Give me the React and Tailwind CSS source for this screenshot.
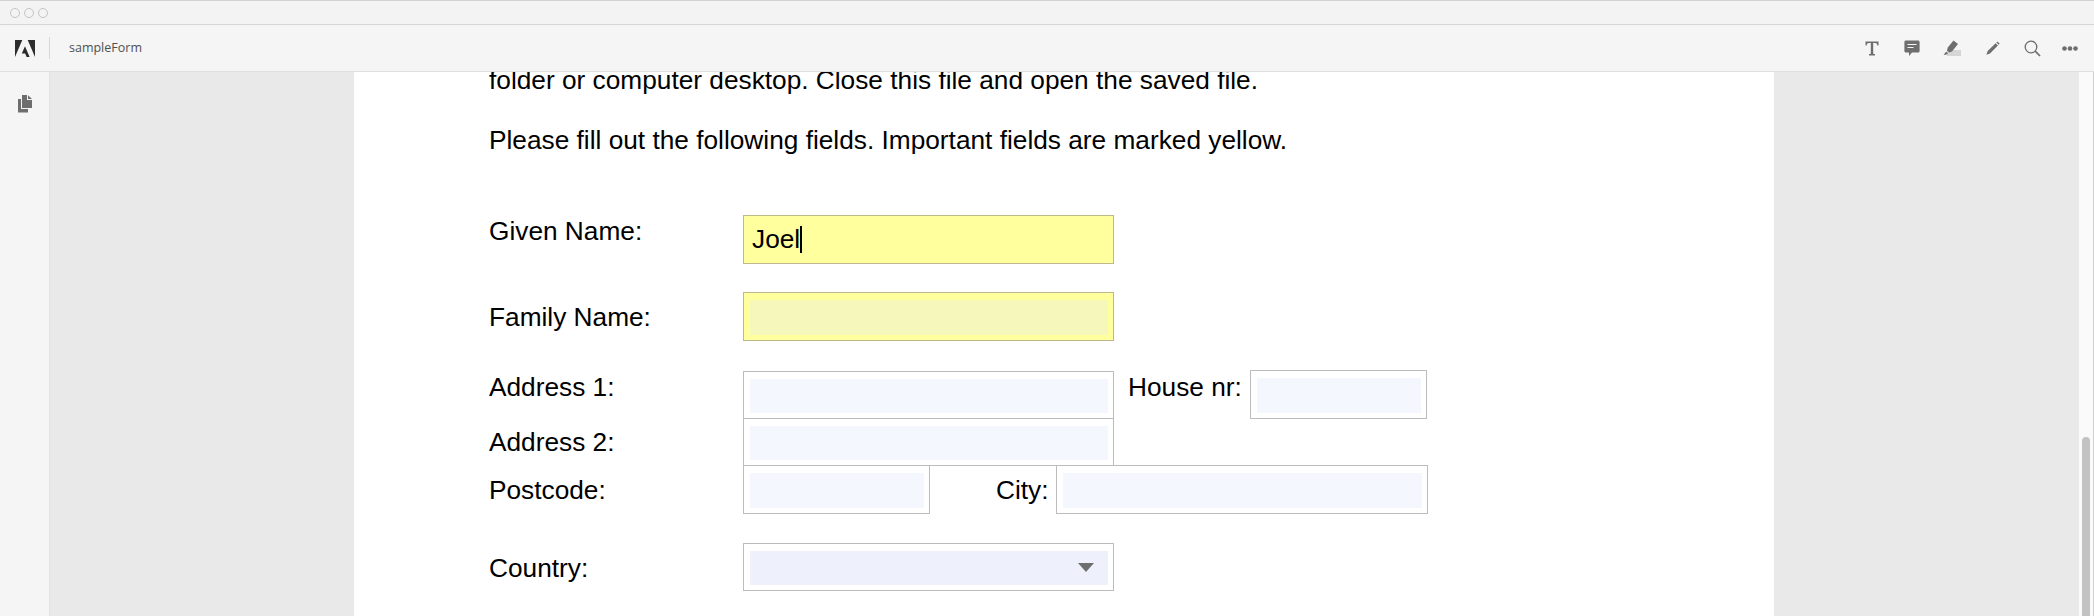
const BODY_FONT = 'font-["Liberation_Sans",Arial,sans-serif]'

function AdobeLogo() {
  return (
    <svg width="20" height="17" viewBox="0 0 20 17" fill="#2c2c2c">
      <path d="M0 0H7.3L0 17Z" />
      <path d="M12.7 0H20V17Z" />
      <path d="M10 6.3L14.6 17H11.6L10.2 13.5H6.8Z" />
    </svg>
  )
}

function PagesIcon() {
  return (
    <svg width="16" height="18" viewBox="0 0 16 18" fill="#6e6e6e">
      <path d="M5 0H10V5H15V13H5Z" />
      <path d="M11 0.2L15 4H11Z" />
      <path d="M1 4H4V14H11V17.5H1Z" />
    </svg>
  )
}

function TextIcon() {
  return (
    <svg width="14" height="15" viewBox="0 0 14 15" fill="#6e6e6e">
      <path d="M0.5 0.5H13.5V4.6H12.3C12.2 3 11.8 2 10.2 2H8.2V12.8L10 13.2V14.5H4V13.2L5.8 12.8V2H3.8C2.2 2 1.8 3 1.7 4.6H0.5Z" />
    </svg>
  )
}

function CommentIcon() {
  return (
    <svg width="16" height="17" viewBox="0 0 16 17">
      <path d="M2 0.5H14C15 0.5 15.6 1.1 15.6 2V11C15.6 11.9 15 12.5 14 12.5H8L5 16V12.5H2C1 12.5 0.4 11.9 0.4 11V2C0.4 1.1 1 0.5 2 0.5Z" fill="#6e6e6e" />
      <path d="M3.5 4.5H12.5M3.5 7.5H9.5" stroke="#f5f5f5" strokeWidth="1.2" />
    </svg>
  )
}

function HighlightIcon() {
  return (
    <svg width="18" height="16" viewBox="0 0 18 16">
      <rect x="4" y="10" width="14" height="6" fill="#d6d6d6" />
      <path d="M10.5 0.5L15 4L9 11.5L6 12.5L4 10.5L4.8 7.5Z" fill="#6e6e6e" />
      <path d="M3.2 11.5L5 13.5L3.6 14.6L0.6 15Z" fill="#6e6e6e" />
    </svg>
  )
}

function PencilIcon() {
  return (
    <svg width="15" height="15" viewBox="0 0 15 15" fill="#6e6e6e">
      <path d="M10.6 2.2L12.9 4.4L5 12.4L1.4 13.7L2.7 10.1Z" />
      <path d="M11.4 1.4L12.4 0.4L14.7 2.7L13.7 3.7Z" />
    </svg>
  )
}

function SearchIcon() {
  return (
    <svg width="17" height="17" viewBox="0 0 17 17" fill="none" stroke="#6e6e6e">
      <circle cx="7" cy="7" r="5.8" strokeWidth="1.3" />
      <path d="M11.2 11.2L16 16" strokeWidth="1.7" />
    </svg>
  )
}

function MoreIcon() {
  return (
    <svg width="16" height="5" viewBox="0 0 16 5" fill="#6e6e6e">
      <circle cx="2.5" cy="2.5" r="2.3" />
      <circle cx="8" cy="2.5" r="2.3" />
      <circle cx="13.5" cy="2.5" r="2.3" />
    </svg>
  )
}

function ToolBtn({ children, className = 'w-10' }) {
  return <div className={`flex h-10 items-center justify-center ${className}`}>{children}</div>
}

// un champ de formulaire PDF : cadre + zone teintée
const BLUE_FRAME = 'border-[#bcbcbc] bg-white'
const YELLOW_FRAME = 'border-[#bdb98a] bg-[#ffff9e]'

function Field({ className, frame = BLUE_FRAME, tint = 'bg-[#f4f7fe]' }) {
  return (
    <div className={`shrink-0 border pt-[7px] pr-[5px] pb-[5px] pl-[6px] ${frame} ${className}`}>
      <div className={`h-full w-full ${tint}`} />
    </div>
  )
}

function Label({ children, className = '' }) {
  return <div className={`h-8 shrink-0 leading-8 ${className}`}>{children}</div>
}

export default function App() {
  return (
    <div className="flex h-[616px] w-[2094px] flex-col overflow-hidden bg-[#e9e9e9]">
      <div className="flex h-[25px] shrink-0 items-center gap-[4px] border-t border-b border-t-[#d2d2d2] border-b-[#d6d6d6] bg-[#f3f3f3] pl-[10px]">
        <span className="h-[10px] w-[10px] rounded-full border border-[#c4c4c4]" />
        <span className="h-[10px] w-[10px] rounded-full border border-[#c4c4c4]" />
        <span className="h-[10px] w-[10px] rounded-full border border-[#c4c4c4]" />
      </div>

      <header className="flex h-[47px] shrink-0 items-center border-b border-[#dfdfdf] bg-[#f5f5f5]">
        <div className="ml-[15px] flex h-[17px] w-[20px] items-center"><AdobeLogo /></div>
        <div className="ml-[14px] h-[22px] w-px bg-[#d8d8d8]" />
        <span className="ml-[19px] font-['Open_Sans',sans-serif] text-[12.5px] text-[#505050]">sampleForm</span>
        <div className="ml-auto flex items-center pr-[6px]">
          <ToolBtn><TextIcon /></ToolBtn>
          <ToolBtn><CommentIcon /></ToolBtn>
          <ToolBtn><HighlightIcon /></ToolBtn>
          <ToolBtn><PencilIcon /></ToolBtn>
          <ToolBtn><SearchIcon /></ToolBtn>
          <ToolBtn className="w-9"><MoreIcon /></ToolBtn>
        </div>
      </header>

      <div className="flex min-h-0 flex-1">
        <aside className="flex w-[50px] shrink-0 justify-center border-r border-[#e0e0e0] bg-[#f5f5f5] pt-[23px]">
          <PagesIcon />
        </aside>

        <main className="flex min-w-0 flex-1 justify-center overflow-hidden pr-[1px]">
          <div className={`h-fit w-[1420px] shrink-0 bg-white pl-[135px] text-[26.25px] text-black ${BODY_FONT} -mt-[8px] pb-[100px]`}>
            <p className="leading-8">folder or computer desktop. Close this file and open the saved file.</p>
            <p className="mt-[28px] leading-8">Please fill out the following fields. Important fields are marked yellow.</p>

            <div className="mt-[59px] flex">
              <Label className="w-[254px]">Given Name:</Label>
              <div className={`flex h-[49px] w-[371px] shrink-0 items-center border pl-[8px] leading-none ${YELLOW_FRAME}`}>
                Joel<span className="h-[27px] w-[2px] bg-black" />
              </div>
            </div>

            <div className="mt-[28px] flex">
              <Label className="mt-[9px] w-[254px]">Family Name:</Label>
              <Field className="h-[49px] w-[371px]" frame={YELLOW_FRAME} tint="bg-[#f6f7bb]" />
            </div>

            <div className="mt-[30px] flex">
              <Label className="w-[254px]">Address 1:</Label>
              <Field className="h-[48px] w-[371px]" />
              <Label className="ml-[14px]">House nr:</Label>
              <Field className="-mt-px ml-[8px] h-[49px] w-[177px]" />
            </div>

            <div className="-mt-px flex">
              <Label className="mt-[8px] w-[254px]">Address 2:</Label>
              <Field className="h-[48px] w-[371px]" />
            </div>

            <div className="-mt-px flex">
              <Label className="mt-[9px] w-[254px]">Postcode:</Label>
              <Field className="h-[49px] w-[187px]" />
              <Label className="mt-[9px] ml-[66px]">City:</Label>
              <Field className="ml-[7px] h-[49px] w-[372px]" />
            </div>

            <div className="relative mt-[29px] flex">
              <Label className="mt-[9px] w-[254px]">Country:</Label>
              <Field className="h-[48px] w-[371px]" tint="bg-[#eef0fc]" />
              <svg className="absolute top-[20px] left-[589px]" width="16" height="9" viewBox="0 0 16 9" fill="#6e6e6e">
                <path d="M0 0H16L8 9Z" />
              </svg>
            </div>
          </div>
        </main>

        <div className="flex w-[15px] shrink-0 flex-col border-r border-[#cfcfcf] bg-[#fafafa] pt-[365px] pl-[3px]">
          <div className="h-full w-[8px] rounded-t-full bg-[#c2c2c2]" />
        </div>
      </div>
    </div>
  )
}
